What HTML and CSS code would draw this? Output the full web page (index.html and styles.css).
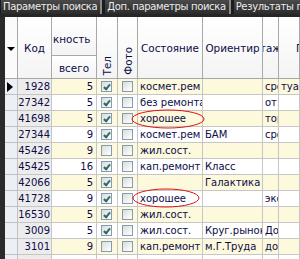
FILE: index.html
```html
<!DOCTYPE html>
<html>
<head>
  <title>Результаты поиска</title>
  <link rel="stylesheet" href="styles.css">
</head>
<body>
  <div class="tabs">
    <span class="tab">Параметры поиска</span>
    <span class="tab">Доп. параметры поиска</span>
    <span class="tab">Результаты поиска</span>
  </div>
  <div class="frame">
    <div class="grid">
      <div class="hd ind span2"><span class="sort"></span></div>
      <div class="hd span2">Код</div>
      <div class="hd group">кность</div>
      <div class="hd span2 vert"><span>Тел</span></div>
      <div class="hd span2 vert"><span>Фото</span></div>
      <div class="hd span2">Состояние</div>
      <div class="hd span2">Ориентир</div>
      <div class="hd span2 clip">Этажи</div>
      <div class="hd span2 wide">Примечание</div>
      <div class="hd sub">всего</div>

      <div class="c ind"><span class="cur"></span></div><div class="c code">1928</div><div class="c num y">5</div><div class="c y"><i class="cb on"></i></div><div class="c y"><i class="cb"></i></div><div class="c y">космет.рем</div><div class="c y"></div><div class="c y">срочно</div><div class="c y">туалет</div>
      <div class="c ind"></div><div class="c code">27342</div><div class="c num">5</div><div class="c"><i class="cb on"></i></div><div class="c"><i class="cb"></i></div><div class="c">без ремонта</div><div class="c"></div><div class="c">от.</div><div class="c"></div>
      <div class="c ind"></div><div class="c code">41698</div><div class="c num y">5</div><div class="c y"><i class="cb on"></i></div><div class="c y"><i class="cb"></i></div><div class="c y">хорошее</div><div class="c y"></div><div class="c y">торг</div><div class="c y"></div>
      <div class="c ind"></div><div class="c code">27344</div><div class="c num">9</div><div class="c"><i class="cb on"></i></div><div class="c"><i class="cb"></i></div><div class="c">космет.рем</div><div class="c">БАМ</div><div class="c">срочно</div><div class="c"></div>
      <div class="c ind"></div><div class="c code">45426</div><div class="c num y">9</div><div class="c y"><i class="cb"></i></div><div class="c y"><i class="cb"></i></div><div class="c y">жил.сост.</div><div class="c y"></div><div class="c y"></div><div class="c y"></div>
      <div class="c ind"></div><div class="c code">45425</div><div class="c num">16</div><div class="c"><i class="cb on"></i></div><div class="c"><i class="cb"></i></div><div class="c">кап.ремонт</div><div class="c">Класс</div><div class="c"></div><div class="c"></div>
      <div class="c ind"></div><div class="c code">42066</div><div class="c num y">5</div><div class="c y"><i class="cb on"></i></div><div class="c y"><i class="cb"></i></div><div class="c y"></div><div class="c y">Галактика</div><div class="c y"></div><div class="c y"></div>
      <div class="c ind"></div><div class="c code">41728</div><div class="c num">9</div><div class="c"><i class="cb on"></i></div><div class="c"><i class="cb"></i></div><div class="c">хорошее</div><div class="c"></div><div class="c">эксп</div><div class="c"></div>
      <div class="c ind"></div><div class="c code">16530</div><div class="c num y">5</div><div class="c y"><i class="cb on"></i></div><div class="c y"><i class="cb"></i></div><div class="c y">жил.сост.</div><div class="c y"></div><div class="c y"></div><div class="c y"></div>
      <div class="c ind"></div><div class="c code">3009</div><div class="c num">5</div><div class="c"><i class="cb on"></i></div><div class="c"><i class="cb"></i></div><div class="c">жил.сост.</div><div class="c">Круг.рынок</div><div class="c">До</div><div class="c"></div>
      <div class="c ind"></div><div class="c code">3101</div><div class="c num y">9</div><div class="c y"><i class="cb"></i></div><div class="c y"><i class="cb"></i></div><div class="c y">кап.ремонт</div><div class="c y">м.Г.Труда</div><div class="c y">до</div><div class="c y"></div>
      <div class="c ind"></div><div class="c code"></div><div class="c num"></div><div class="c"></div><div class="c"></div><div class="c"></div><div class="c"></div><div class="c"></div><div class="c"></div>
    </div>
    <svg class="marks" width="300" height="259">
      <ellipse cx="168" cy="119" rx="36" ry="9" fill="none" stroke="#e01010" stroke-width="1"/>
      <ellipse cx="166" cy="198" rx="33" ry="9" fill="none" stroke="#e01010" stroke-width="1"/>
    </svg>
  </div>
</body>
</html>
```

FILE: styles.css
```css
body {
  margin: 0;
  width: 300px;
  height: 259px;
  overflow: hidden;
  background: #2a2a2a;
  font-family: 'DejaVu Sans', sans-serif;
  font-size: 10px;
}

.tabs {
  display: flex;
  height: 14px;
  padding-left: 1px;
  overflow: hidden;
  background: #1c1c1c;
  border-bottom: 3px solid #262626;
}

.tab {
  padding: 0 3px 0 2px;
  line-height: 14px;
  color: #ececec;
  font-size: 10px;
  letter-spacing: -0.35px;
  white-space: nowrap;
  background: linear-gradient(#4a4a4a, #2c2c2c);
  border-right: 2px solid #8a8a8a;
  margin-right: 3px;
}

.frame {
  position: relative;
  height: 242px;
  padding-left: 5px;
  overflow: hidden;
}

.grid {
  display: grid;
  grid-template-columns: 13px 34px 45px 21px 20px 65px 60px 16px 21px;
  grid-template-rows: 39px 23px repeat(12, 16px);
  background: #fff;
  color: #0c0c46;
}

.hd {
  display: flex;
  align-items: center;
  justify-content: center;
  background: linear-gradient(#ffffff, #f4f4f4);
  border-right: 1px solid #a8a8a8;
  border-bottom: 1px solid #a8a8a8;
  font-size: 10.4px;
  white-space: nowrap;
  overflow: hidden;
}

.span2 {
  grid-row: span 2;
}

.hd.group {
  justify-content: flex-start;
  padding: 6px 0 0 1px;
}

.hd.sub {
  grid-column: 3;
  padding-top: 2px;
}

.hd.vert {
  align-items: flex-end;
  padding-bottom: 3px;
}

.hd.vert span {
  writing-mode: vertical-rl;
  transform: rotate(180deg);
}

.hd.wide {
  justify-content: flex-start;
  padding-left: 17px;
}

.hd.ind {
  background: #fbfbfb;
}

.sort {
  width: 0;
  height: 0;
  margin-top: 2px;
  border-left: 4px solid transparent;
  border-right: 4px solid transparent;
  border-top: 4px solid #000;
}

.c {
  display: flex;
  align-items: center;
  padding-left: 2px;
  border-right: 1px solid #c6c6c6;
  border-bottom: 1px solid #c6c6c6;
  font-size: 10px;
  line-height: 15px;
  white-space: nowrap;
  overflow: hidden;
}

.c.y {
  background: #fdf9dc;
}

.c.ind {
  padding-left: 2px;
  background: #ecf0f6;
  border-color: #c0c0c0;
}

.c.code {
  justify-content: flex-end;
  padding: 0 1px 0 0;
  background: #ececec;
}

.c.num {
  justify-content: flex-end;
  padding: 0 3px 0 0;
}

.cur {
  width: 0;
  height: 0;
  border-top: 5px solid transparent;
  border-bottom: 5px solid transparent;
  border-left: 6px solid #000;
}

.cb {
  position: relative;
  display: block;
  width: 11px;
  height: 11px;
  box-sizing: border-box;
  margin-left: 2px;
  border: 1px solid #7f9db9;
  background: linear-gradient(135deg, #dcdcd6, #ffffff);
}

.cb.on::after {
  content: "";
  position: absolute;
  left: 3px;
  top: 1px;
  width: 2px;
  height: 5px;
  border-right: 2px solid #2d6a68;
  border-bottom: 2px solid #2d6a68;
  transform: rotate(40deg);
}

.marks {
  position: absolute;
  left: 0;
  top: -17px;
}
```
